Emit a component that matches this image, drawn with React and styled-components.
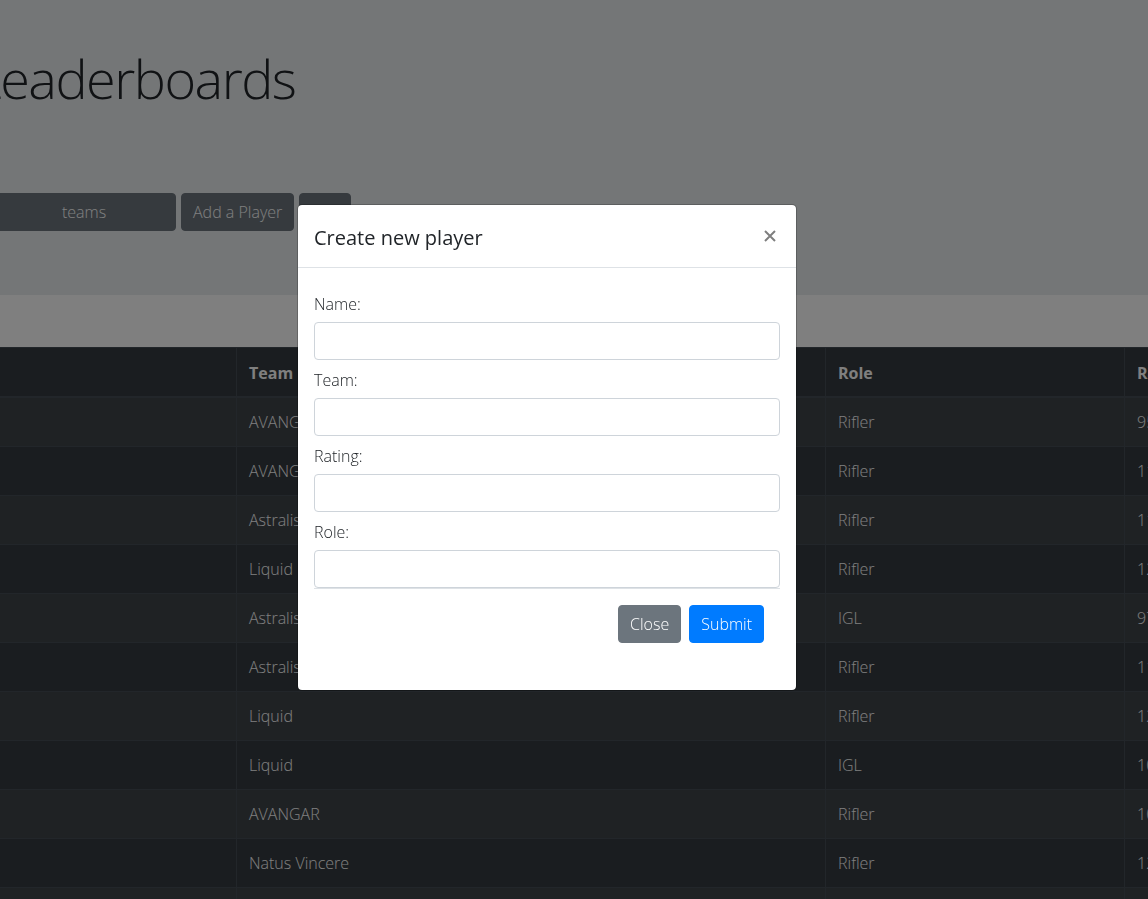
import React from 'react'
import styled, { createGlobalStyle } from 'styled-components'

const GlobalStyle = createGlobalStyle`
  * { box-sizing: border-box; }
  html, body {
    margin: 0;
    padding: 0;
    overflow: hidden;
    background: #fff;
  }
  body {
    font-family: "Open Sans", "Noto Sans", sans-serif;
    font-size: 16px;
    font-weight: 300;
    line-height: 1.5;
    color: #212529;
  }
`

// the page is wider than the window and scrolled a bit to the right
const Page = styled.div`
  width: 1800px;
  margin-left: -200px;
`

const Jumbotron = styled.header`
  background: #e9ecef;
  padding: 46px 0 64px 174px;
  margin-bottom: 52px;
`

const Title = styled.h1`
  margin: 0;
  font-size: 54px;
  font-weight: 300;
  line-height: 1.2;
  letter-spacing: -1.5px;
`

const Actions = styled.div`
  display: flex;
  gap: 5px;
  margin-top: 82px;
  padding-left: 18px;
`

const Button = styled.button`
  font: inherit;
  font-weight: 300;
  color: #fff;
  background: ${props => (props.$primary ? '#007bff' : '#6c757d')};
  border: 1px solid ${props => (props.$primary ? '#007bff' : '#6c757d')};
  border-radius: 4px;
  padding: 6px 11px;
  line-height: 24px;
  width: ${props => props.$width || 'auto'};
  text-align: center;
  cursor: pointer;
`

const Table = styled.table`
  width: 1624px;
  table-layout: fixed;
  border-collapse: collapse;
  background: #343a40;
  color: #fff;
  border: 1px solid #454d55;
`

const Col = styled.col`
  width: ${props => props.$w}px;
`

const Th = styled.th`
  text-align: left;
  font-weight: 700;
  padding: 13px 12px 11px;
  border: 1px solid #454d55;
  border-bottom-width: 2px;
  vertical-align: bottom;
`

const Row = styled.tr`
  &:nth-of-type(odd) {
    background: rgba(255, 255, 255, 0.05);
  }
`

const Td = styled.td`
  padding: 12px;
  border: 1px solid #454d55;
  white-space: nowrap;
  overflow: hidden;
`

const Backdrop = styled.div`
  position: fixed;
  inset: 0;
  background: rgba(0, 0, 0, 0.5);
`

const Modal = styled.div`
  position: fixed;
  top: 204px;
  left: 297px;
  width: 500px;
  background: #fff;
  border: 1px solid rgba(0, 0, 0, 0.2);
  border-radius: 5px;
  background-clip: padding-box;
`

const ModalHeader = styled.div`
  display: flex;
  align-items: flex-start;
  justify-content: space-between;
  padding: 18px 16px 14px;
  border-bottom: 1px solid #dee2e6;
`

const ModalTitle = styled.h5`
  margin: 0;
  font-size: 20px;
  font-weight: 400;
  line-height: 1.5;
`

const CloseX = styled.button`
  display: flex;
  padding: 0;
  margin: 7px 4px 0 auto;
  background: transparent;
  border: 0;
  color: #000;
  opacity: 0.5;
  cursor: pointer;
`

const ModalBody = styled.div`
  padding: 16px;
`

const Form = styled.form`
  margin-bottom: 15px;
`

const Label = styled.label`
  display: block;
  margin: 8px 0 6px;
`

const Input = styled.input`
  display: block;
  width: 100%;
  height: 38px;
  padding: 6px 12px;
  font: inherit;
  color: #495057;
  background: #fff;
  border: 1px solid #ced4da;
  border-radius: 4px;
`

const Footer = styled.div`
  display: flex;
  justify-content: flex-end;
  padding: 12px;
  border-top: 1px solid #dee2e6;

  & > * {
    margin: 4px;
  }
`

const players = [
  ['Jame', 'AVANGAR', 'Rifler', '95'],
  ['qikert', 'AVANGAR', 'Rifler', '114'],
  ['device', 'Astralis', 'Rifler', '118'],
  ['NAF', 'Liquid', 'Rifler', '123'],
  ['gla1ve', 'Astralis', 'IGL', '97'],
  ['Magisk', 'Astralis', 'Rifler', '112'],
  ['EliGE', 'Liquid', 'Rifler', '121'],
  ['nitr0', 'Liquid', 'IGL', '104'],
  ['buster', 'AVANGAR', 'Rifler', '106'],
  ['s1mple', 'Natus Vincere', 'Rifler', '128'],
  ['electronic', 'Natus Vincere', 'Rifler', '116'],
]

const fields = ['Name', 'Team', 'Rating', 'Role']

export default function App() {
  return (
    <>
      <GlobalStyle />
      <Page>
        <Jumbotron>
          <Title>Leaderboards</Title>
          <Actions>
            <Button $width="184px">teams</Button>
            <Button>Add a Player</Button>
            <Button>Edit</Button>
          </Actions>
        </Jumbotron>
        <Table>
          <colgroup>
            <Col $w={436} />
            <Col $w={589} />
            <Col $w={299} />
            <Col $w={300} />
          </colgroup>
          <thead>
            <tr>
              <Th>Name</Th>
              <Th>Team</Th>
              <Th>Role</Th>
              <Th>Rating</Th>
            </tr>
          </thead>
          <tbody>
            {players.map(([name, team, role, rating]) => (
              <Row key={name}>
                <Td>{name}</Td>
                <Td>{team}</Td>
                <Td>{role}</Td>
                <Td>{rating}</Td>
              </Row>
            ))}
          </tbody>
        </Table>
      </Page>
      <Backdrop />
      <Modal>
        <ModalHeader>
          <ModalTitle>Create new player</ModalTitle>
          <CloseX aria-label="Close">
            <svg width="12" height="12" viewBox="0 0 12 12">
              <path d="M1 1L11 11M11 1L1 11" stroke="currentColor" strokeWidth="2" />
            </svg>
          </CloseX>
        </ModalHeader>
        <ModalBody>
          <Form onSubmit={e => e.preventDefault()}>
            {fields.map(f => (
              <div key={f}>
                <Label>{f}:</Label>
                <Input type="text" />
              </div>
            ))}
            <Footer>
              <Button type="button">Close</Button>
              <Button type="submit" $primary>Submit</Button>
            </Footer>
          </Form>
        </ModalBody>
      </Modal>
    </>
  )
}
